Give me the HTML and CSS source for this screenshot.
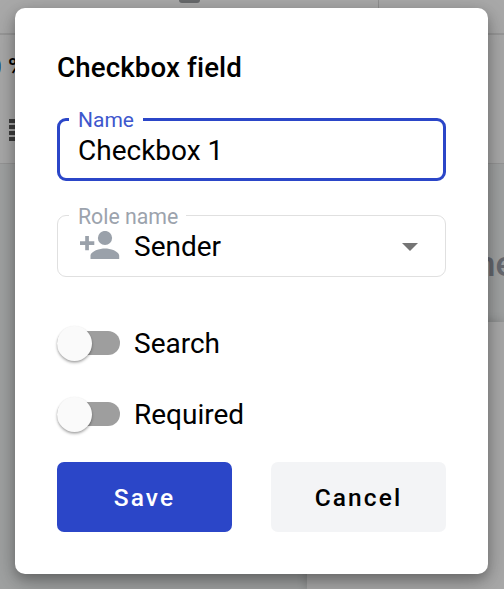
FILE: index.html
```html
<!DOCTYPE html>
<html lang="en">
<head>
<meta charset="utf-8">
<title>Checkbox field</title>
<link rel="stylesheet" href="styles.css">
</head>
<body>
<div class="backdrop" aria-hidden="true">
  <div class="topbar"><span class="topbar-tab"></span><span class="topbar-side"></span></div>
  <div class="toolbar">
    <span class="zoom-level"><span class="zoom-value">0</span><span>%</span></span>
    <span class="lines-icon"></span>
  </div>
  <div class="canvas">
    <div class="canvas-title">ne</div>
    <div class="sheet-right"></div>
  </div>
</div>
<form class="dialog">
  <h2 class="title">Checkbox field</h2>
  <div class="field field-active">
    <span class="field-label">Name</span>
    <span class="field-value">Checkbox 1</span>
  </div>
  <div class="field field-select">
    <span class="field-label">Role name</span>
    <svg class="person-icon" viewBox="0 0 40 28"><circle cx="25" cy="7" r="7.1"/><path d="M10.500 28v-3.300c0-4.800 9.600-7.300 14.500-7.300s14.200 2.500 14.200 7.300V28zM5.200 5h3.700v5.300h5.400V14H8.900v5.200H5.200V14H0v-3.700h5.200z"/></svg>
    <span class="field-value">Sender</span>
    <svg class="arrow-icon" viewBox="0 0 16 8"><path d="M0 0h16L8 8z"/></svg>
  </div>
  <div class="toggles">
    <label class="toggle"><span class="track"><span class="thumb"></span></span><span class="toggle-text">Search</span></label>
    <label class="toggle"><span class="track"><span class="thumb"></span></span><span class="toggle-text">Required</span></label>
  </div>
  <div class="actions">
    <button class="button primary" type="button">Save</button>
    <button class="button secondary" type="button">Cancel</button>
  </div>
</form>
</body>
</html>
```
FILE: styles.css
```css
* { box-sizing: border-box; }
body {
  margin: 0;
  width: 504px;
  height: 589px;
  overflow: hidden;
  position: relative;
  padding: 8px 16px 15px 15px;
  background: #a0a2a2;
  font-family: Roboto, sans-serif;
  color: #000;
}
.backdrop { position: absolute; inset: 0; overflow: hidden; }
.topbar { position: relative; height: 35px; background: #a9a9a9; border-bottom: 2px solid #989898; }
.topbar-tab { position: absolute; left: 179px; top: -6px; width: 21px; height: 9px; border-radius: 3px; background: #67696b; }
.topbar-side { position: absolute; left: 378px; top: 0; width: 1px; height: 34px; background: #919191; }
.toolbar { position: relative; height: 129px; background: #a9a9a9; border-bottom: 1px solid #969696; }
.zoom-level { position: absolute; left: -12px; top: 17px; display: flex; gap: 6px; font-size: 24px; line-height: 30px; font-weight: 500; white-space: nowrap; }
.zoom-value { width: 14px; color: #001b62; }
.lines-icon {
  position: absolute; left: 9px; top: 84px; width: 24px; height: 22px;
  background: repeating-linear-gradient(#3d3d3d 0 4px, transparent 4px 6px);
}
.canvas { position: relative; height: 425px; background: #a0a2a2; }
.canvas-title { position: absolute; left: 476px; top: 81px; font-size: 35px; line-height: 40px; font-weight: 500; color: #666970; }
.sheet-right { position: absolute; left: 307px; top: 158px; width: 197px; height: 267px; background: #a9a9a9; box-shadow: 0 0 10px rgba(0, 0, 0, .2); }
.dialog {
  position: relative;
  width: 473px;
  height: 566px;
  padding: 39px 42px 42px;
  background: #fff;
  border-radius: 10px;
  box-shadow: 0 5px 12px rgba(0, 0, 0, .25), 0 8px 28px rgba(0, 0, 0, .22);
}
.title { margin: 0 0 29px; font-size: 27.7px; line-height: 42px; font-weight: 500; letter-spacing: .12px; white-space: nowrap; }
.field { position: relative; display: flex; align-items: center; width: 389px; height: 63px; border-radius: 9px; padding-left: 21px; }
.field-active { border: 3px solid #2b46c8; padding-left: 18px; }
.field-label {
  position: absolute; left: 12px; top: -13px; padding: 0 9px;
  background: #fff; font-size: 21px; line-height: 26px; white-space: nowrap;
}
.field-active .field-label { left: 9px; top: -14px; color: #3e57cd; }
.field-value { padding-top: 2px; font-size: 28px; line-height: 32px; white-space: nowrap; }
.field-select { margin-top: 34px; height: 62px; border: 1px solid #e0e0e0; }
.field-select .field-label { left: 11px; top: -12px; padding: 0 8px 0 9px; color: #9ca3ad; font-size: 21.300px; }
.person-icon { width: 40px; height: 28px; fill: #9aa1aa; margin: -2px 14px 0 1px; }
.arrow-icon { width: 16px; height: 8px; margin: 2px 27px 0 auto; fill: #757575; }
.toggles { display: flex; flex-direction: column; gap: 35px; margin-top: 48px; }
.toggle { display: flex; align-items: center; height: 36px; gap: 14px; }
.track { display: flex; align-items: center; width: 63px; height: 24px; border-radius: 12px; background: #9e9e9e; }
.thumb { width: 35px; height: 35px; flex: none; border-radius: 50%; background: #fafafa; box-shadow: 0 2px 3px rgba(0, 0, 0, .24), 0 1px 2px rgba(0, 0, 0, .16); }
.toggle-text { padding-top: 2px; font-size: 28px; line-height: 36px; }
.actions { display: flex; justify-content: space-between; margin-top: 30px; }
.button { width: 175px; height: 70px; border: 0; border-radius: 7px; padding: 2px 0 0; font: 500 24.5px/32px Roboto, sans-serif; letter-spacing: 2.1px; }
.primary { background: #2b46c8; color: #fff; }
.secondary { background: #f3f4f6; color: #000; }
```
